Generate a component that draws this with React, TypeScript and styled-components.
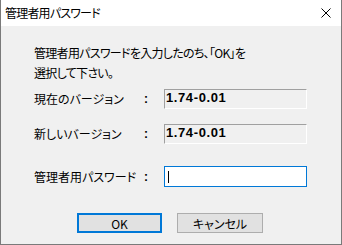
import * as React from "react";
import styled, { createGlobalStyle } from "styled-components";

const Global = createGlobalStyle`
  html, body { margin: 0; padding: 0; background: #ffffff; }
  * { box-sizing: border-box; }
`;

const jp = `"Noto Sans CJK JP", "Noto Sans", sans-serif`;

const Window = styled.div`
  width: 342px;
  height: 245px;
  border: 1px solid #7a7a7a;
  border-top: none;
  display: flex;
  flex-direction: column;
  background: #f0f0f0;
  font-family: ${jp};
  font-feature-settings: "palt";
  color: #000;
`;

const TitleBar = styled.div`
  height: 26px;
  background: #ffffff;
  display: flex;
  align-items: center;
  justify-content: space-between;
  padding: 0 10px 1px 4px;
  font-size: 12px;
  letter-spacing: -0.8px;
`;

const Body = styled.div`
  flex: 1;
  padding: 17px 0 0 33px;
  display: flex;
  flex-direction: column;
  font-size: 12px;
`;

const Message = styled.div`
  line-height: 20px;
  letter-spacing: -0.7px;
`;

const Rows = styled.div`
  display: grid;
  grid-template-columns: 110px 20px 143px;
  grid-auto-rows: 20px;
  row-gap: 15px;
  margin-top: 6px;
  align-items: center;
`;

const Label = styled.span`
  line-height: 20px;
`;

const Colon = styled.span`
  font-family: "Liberation Sans", sans-serif;
  font-weight: bold;
  font-size: 12px;
`;

const ValueBox = styled.div`
  height: 20px;
  border-top: 1px solid #a0a0a0;
  border-left: 1px solid #a0a0a0;
  border-bottom: 1px solid #ffffff;
  border-right: 1px solid #ffffff;
  padding: 0 0 0 1px;
  font-family: "Liberation Sans", sans-serif;
  font-weight: bold;
  font-size: 13px;
  letter-spacing: 0.6px;
  line-height: 15px;
`;

const PasswordRow = styled(Rows)`
  margin-top: 22px;
  grid-auto-rows: 21px;
`;

const PasswordBox = styled.div`
  height: 21px;
  background: #ffffff;
  border: 1px solid #0078d7;
  display: flex;
  align-items: center;
  padding-left: 3px;
`;

const Caret = styled.span`
  width: 1px;
  height: 12px;
  background: #000;
`;

const Buttons = styled.div`
  display: flex;
  gap: 15px;
  margin-top: 26px;
  margin-left: 43px;
`;

const Button = styled.div<{ $primary?: boolean }>`
  width: ${(p) => (p.$primary ? 85 : 86)}px;
  height: 20px;
  background: #e1e1e1;
  border: ${(p) => (p.$primary ? "2px solid #0078d7" : "1px solid #adadad")};
  display: flex;
  align-items: center;
  justify-content: center;
  font-size: 12px;
`;

const Close = () => (
  <svg width="10" height="10" viewBox="0 0 10 10">
    <path d="M0.5 0.5 L9.5 9.5 M9.5 0.5 L0.5 9.5" stroke="#000" strokeWidth="1" />
  </svg>
);

export default function App() {
  return (
    <>
      <Global />
      <Window>
        <TitleBar>
          <span>管理者用パスワード</span>
          <Close />
        </TitleBar>
        <Body>
          <Message>
            管理者用パスワードを入力したのち、「OK」を
            <br />
            選択して下さい。
          </Message>
          <Rows>
            <Label>現在のバージョン</Label>
            <Colon>:</Colon>
            <ValueBox>1.74-0.01</ValueBox>
            <Label>新しいバージョン</Label>
            <Colon>:</Colon>
            <ValueBox>1.74-0.01</ValueBox>
          </Rows>
          <PasswordRow>
            <Label>管理者用パスワード</Label>
            <Colon>:</Colon>
            <PasswordBox>
              <Caret />
            </PasswordBox>
          </PasswordRow>
          <Buttons>
            <Button $primary>OK</Button>
            <Button>キャンセル</Button>
          </Buttons>
        </Body>
      </Window>
    </>
  );
}
